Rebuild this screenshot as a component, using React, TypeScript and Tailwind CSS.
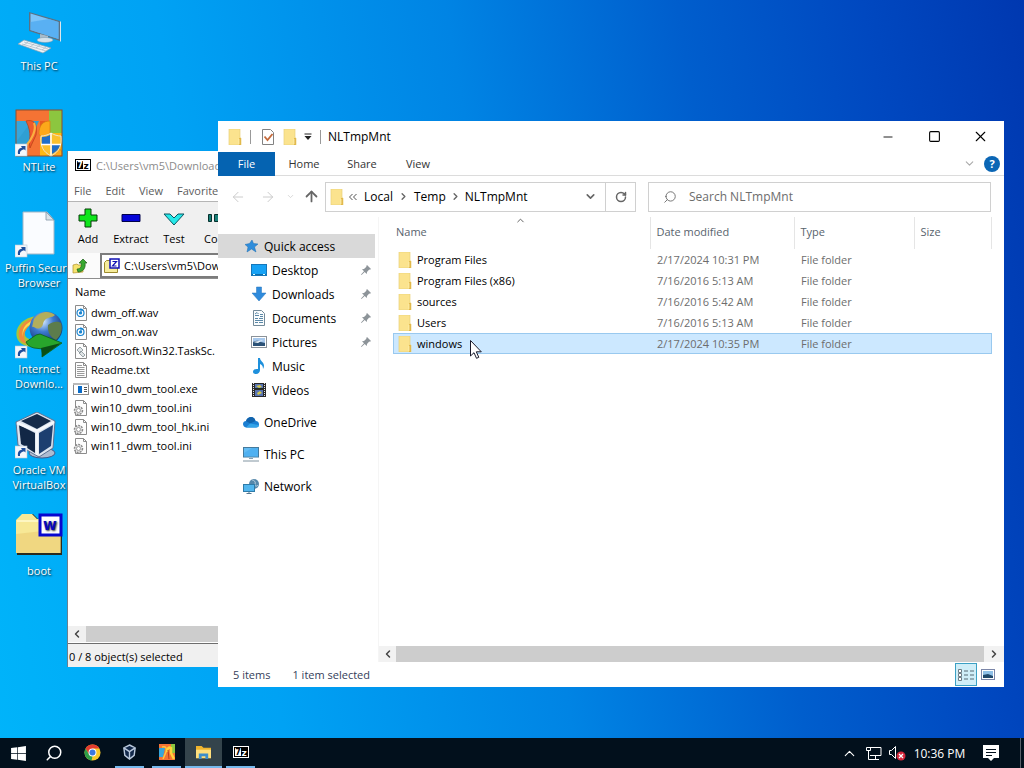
import type { ReactNode } from "react";
import { FaWindows } from "react-icons/fa";
import { ChevronDown, ChevronLeft, ChevronRight, ChevronUp, ArrowLeft, ArrowRight, ArrowUp, RotateCw, Minus, Square, X, Search } from "lucide-react";

const ShortcutArrow = () => (
  <g>
    <rect x="0" y="35" width="12" height="12" fill="#f4f7fb" stroke="#b8c8d8" strokeWidth="0.6" />
    <path d="M3 45c-.5-4 1-6 4-6.200l-1-1.800h4.500v4.500l-1.500-1.200C6 41 4.500 42.500 5 45z" fill="#1f4f9c" />
  </g>
);

const ThisPcIcon = () => (
  <svg viewBox="0 0 48 48" className="w-12 h-12">
    <path d="M14 4l31 9v20L14 23z" fill="#5a7184" />
    <path d="M15.500 5.500l28 8.500v17L15.500 22z" fill="#7cc4fa" />
    <path d="M15.500 14L34 11l9.500 3v17L15.500 22z" fill="#4aa8f0" opacity="0.700" />
    <path d="M45 13l1 1v20l-1-1z" fill="#dde6ec" />
    <path d="M25 26l8 2v4l-8-1z" fill="#a8bccb" />
    <ellipse cx="30" cy="32" rx="8" ry="2.500" fill="#d5e2eb" stroke="#7d95a8" strokeWidth="0.500" />
    <path d="M3 36l6-4 27 8-8 5z" fill="#eef3f7" stroke="#8ba0b2" strokeWidth="0.700" />
    <path d="M7 36l24 7M9 34l24 7M13 34l-4 3M19 36l-4 3M25 37l-4 3M31 39l-4 3" stroke="#a7b6c3" strokeWidth="0.700" />
  </svg>
);

const NtLiteArt = () => (
  <g>
    <rect x="1" y="1" width="46" height="46" fill="#f47334" />
    <path d="M34 1h13v25H34z" fill="#8cc63f" />
    <path d="M1 12h12v23H1z" fill="#35a6dc" />
    <path d="M25 12h9v35h-9z" fill="#e85a20" />
    <path d="M25 24h22v23H25z" fill="#fdb913" />
    <path d="M1 33L17 12h7L11 39H1z" fill="#2f9fd3" />
    <path d="M11 12c7-2 12 2 10 14L15 39c-2-8 3-13-4-27z" fill="#ee5a2d" stroke="#b73e14" strokeWidth="0.700" />
    <path d="M24 25c0-9 4-13 11-13v14l12 17v4h-9z" fill="#fca81a" stroke="#d97c11" strokeWidth="0.700" />
    <path d="M19 14c3 7-3 17-8 23" stroke="#fbb040" strokeWidth="2" fill="none" />
  </g>
);

const NtLiteIcon = () => (
  <svg viewBox="0 0 48 48" className="w-12 h-12">
    <NtLiteArt />
    <rect x="1" y="1" width="46" height="46" fill="none" stroke="#8e4e2c" />
    <path d="M36 24c3 2 7 3 10 3 1 10-2 16-10 20-8-4-11-10-10-20 3 0 7-1 10-3z" fill="#fbc02d" stroke="#e8eef4" strokeWidth="0.800" />
    <path d="M35 26v9h-8c-.3-2-.3-5 0-7 3 0 6-1 8-2zM37 36h8c-1 4-4 7-8 9z" fill="#1e6ec8" />
    <path d="M36 24v22M26 35.500h20" stroke="#fff" strokeWidth="1.500" />
    <ShortcutArrow />
  </svg>
);

const PageShortcutIcon = () => (
  <svg viewBox="0 0 48 48" className="w-12 h-12">
    <path d="M8 2h24l7 8v34H8z" fill="#fafcff" stroke="#a4b6c6" />
    <path d="M31 2v8h8z" fill="#dce4ea" stroke="#8295a6" strokeWidth="0.800" />
    <ShortcutArrow />
  </svg>
);

const IdmIcon = () => (
  <svg viewBox="0 0 48 48" className="w-12 h-12">
    <defs>
      <radialGradient id="globe" cx="0.4" cy="0.3" r="0.8">
        <stop offset="0" stopColor="#d9ecff" />
        <stop offset="0.4" stopColor="#3c79cf" />
        <stop offset="1" stopColor="#0b2560" />
      </radialGradient>
    </defs>
    <path d="M21 5C7 7-1 17 2 27c2 6 9 9 18 9v-7c-8-1-11-3-10-8 1-6 6-9 12-11z" fill="#a6c63a" />
    <path d="M20 7C8 9 2 18 4 26c1 4 4 6 8 7-3-4-4-9-1-14 2-4 6-7 10-8z" fill="#f08b3c" />
    <path d="M19 9C10 12 6 19 8 26c-1-7 4-12 12-14z" fill="#f7dc4c" />
    <circle cx="31" cy="17" r="16.500" fill="url(#globe)" />
    <path d="M19 8c6-8 15-9 21-4-3 3-8 2-10 5-3 3-1 6-5 8s-6-2-8-1z" fill="#b3ae5c" />
    <path d="M33 14c5-4 10-4 13-2 2 6 0 13-5 17-5-2-9-8-8-15z" fill="#5c7c4c" />
    <path d="M21 24l4-1 22 9-20 14 1-8-9-1c-4-1-7-3-8-6z" fill="#28a52c" stroke="#0c5e18" strokeWidth="0.800" />
    <path d="M26 37l20-5-19 14z" fill="#0a4f16" />
    <ShortcutArrow />
  </svg>
);

const VirtualBoxIcon = () => (
  <svg viewBox="0 1 48 48" className="w-12 h-12">
    <ellipse cx="27" cy="42" rx="13" ry="5" fill="#aebbd0" stroke="#41598a" />
    <path d="M22 1l18 9-2 27-14 9L3 34 1 11z" fill="#dbe4ef" stroke="#5d7192" />
    <path d="M22 3l14 7-14 8L6 10z" fill="#152b4a" />
    <path d="M4 14l16 8v20L6 33z" fill="#122746" />
    <path d="M38 14l-2 21-12 8V22z" fill="#1d3f70" />
    <path d="M2 12l20 8 17-9M22 20v24" stroke="#f5f8fc" strokeWidth="2.500" fill="none" />
    <ShortcutArrow />
  </svg>
);

const BootFolderIcon = () => (
  <svg viewBox="0 4 48 48" className="w-12 h-12">
    <path d="M2 46V11l6-6h10l5 5h24v36z" fill="#2c2a1c" />
    <path d="M1 44V11l6-6h10l5 5h23v34z" fill="#f7e896" />
    <path d="M1 44V25l45-5v24z" fill="#ecd078" opacity="0.700" />
    <path d="M2 12h43" stroke="#fffbd0" strokeWidth="1.500" />
    <rect x="25" y="6" width="21" height="20" fill="#fff" stroke="#0707d0" strokeWidth="3" />
    <text x="35" y="21" textAnchor="middle" fontFamily="DejaVu Sans" fontWeight="700" fontSize="15" fill="#0707bb">w</text>
  </svg>
);

const FolderIcon = () => (
  <svg viewBox="0 0 16 16" className="w-4 h-4 shrink-0">
    <path d="M2 0h11v9h1v7H2z" fill="#fbe38e" />
    <path d="M2 0h11v9h1v7H2z" fill="none" stroke="#ead078" strokeWidth="0.700" />
    <path d="M12 9h2v7h-2z" fill="#e2b94c" />
    <path d="M12 10v5" stroke="#fff3be" strokeWidth="0.700" />
  </svg>
);

const SevenZipLogo = ({ inverted = false }: { inverted?: boolean }) => (
  <svg viewBox="0 0 16 12" className="w-4 h-3 shrink-0">
    <rect x="0.500" y="0.500" width="15" height="11" fill={inverted ? "#000" : "#fff"} stroke={inverted ? "#fff" : "#000"} />
    <rect x="2" y="2" width="6" height="8" fill={inverted ? "#fff" : "#000"} />
    <text x="5" y="9" textAnchor="middle" fontFamily="DejaVu Sans" fontWeight="700" fontSize="8" fill={inverted ? "#000" : "#fff"}>7</text>
    <text x="11" y="10" textAnchor="middle" fontFamily="DejaVu Sans" fontWeight="700" fontSize="9" fill={inverted ? "#fff" : "#000"}>z</text>
  </svg>
);

const PinIcon = () => (
  <svg viewBox="0 0 12 12" className="w-3 h-3 ml-auto mr-[3px]">
    <path d="M7 1l4 4-1 .7-.8-.1L7 8l-.2 2L4.700 8 1.500 11 1 10.500 4 7.300 2 5.200 4 5l2.400-2.200L6.300 2z" fill="#8d9499" />
  </svg>
);

const FileIcon = ({ kind }: { kind: string }) => {
  if (kind === "exe") {
    return (
      <svg viewBox="0 0 16 16" className="w-4 h-4 shrink-0">
        <rect x="0.500" y="2.500" width="15" height="11" fill="#fff" stroke="#8a8a8a" />
        <path d="M0 2h16v2H0z" fill="#b9b9b9" />
        <rect x="5" y="5" width="4" height="7" fill="#0a6cc8" />
        <path d="M11 6.500h3M11 8.500h3M11 10.500h3" stroke="#555" />
      </svg>
    );
  }
  return (
    <svg viewBox="0 0 16 16" className="w-4 h-4 shrink-0">
      <path d="M2.500.5h8l3 3v12h-11z" fill="#fdfdfd" stroke="#8c8c8c" />
      <path d="M10.500.5v3h3" fill="none" stroke="#8c8c8c" />
      {kind === "wav" && (
        <g fill="none" stroke="#1883cf" strokeWidth="1.200">
          <circle cx="7.500" cy="8" r="3.500" />
          <circle cx="7.500" cy="8" r="1" fill="#1883cf" />
          <path d="M8 8V4l2.500 1.500" />
        </g>
      )}
      {kind === "txt" && <path d="M4 3.500h5M4 5.500h7.500M4 7.500h7.500M4 9.500h7.500M4 11.500h7.500M4 13.500h7.500" stroke="#999" />}
      {kind === "xml" && <path d="M4 7l3-3 3 3-3 3zM6 10l2-2 4 4-2 2z" fill="#dfe4e6" stroke="#849095" strokeWidth="0.800" />}
      {kind === "ini" && (
        <g fill="#e9e9e9" stroke="#8a8a8a">
          <circle cx="5.500" cy="10.500" r="4" strokeDasharray="2 1" strokeWidth="1.500" />
          <circle cx="5.500" cy="10.500" r="2" fill="#fff" strokeWidth="0.800" />
        </g>
      )}
    </svg>
  );
};

const NavIcon = ({ kind }: { kind: string }) => (
  <svg viewBox="0 0 16 16" className="w-4 h-4 shrink-0">
    {kind === "star" && <path d="M9 2l1.500 3.500 4.500.5-3.500 3L13 14 8.500 11 4 14l1-5L2 6.500l4.500-1z" fill="#2f8ddb" stroke="#1f6fb3" strokeWidth="0.500" />}
    {kind === "desktop" && (
      <g>
        <rect x="0.500" y="2.500" width="15" height="11" fill="#17a2f5" stroke="#1677ba" />
        <path d="M1 12.500h14" stroke="#0c6dab" />
        <path d="M2 12.500h2M12 12.500h2" stroke="#dff" />
      </g>
    )}
    {kind === "downloads" && <path d="M5.500 1h5v6H15l-7 8-7-8h4.500z" fill="#2f8bdc" stroke="#2475bd" strokeWidth="0.500" />}
    {kind === "documents" && (
      <g>
        <path d="M2.500.5h8l3 3v12h-11z" fill="#fafcfd" stroke="#738a99" />
        <path d="M4 5.500h4M9 4.500h3M9 6.500h3M4 8.500h3M8 8.500h4M4 10.500h8M4 12.500h3M8 12.500h4" stroke="#5b88a7" />
        <path d="M4 4l2-1.500L7.500 4" stroke="#5b88a7" fill="none" />
      </g>
    )}
    {kind === "pictures" && (
      <g>
        <rect x="0.500" y="2.500" width="15" height="11" fill="#fff" stroke="#8b9299" />
        <rect x="2" y="4" width="12" height="8" fill="#a8c9ed" />
        <path d="M2 8c3-2 6-1 8 0l4 1v3H2z" fill="#2c5277" />
        <path d="M2 8l6-1 4-1-5 3z" fill="#eff6fb" />
      </g>
    )}
    {kind === "music" && <path d="M7 0h2c0 3 4 4 4 8 0 1-.5 2-1 3 0-3-1-4-3-5v6c0 2-1.500 4-4 4-1.800 0-3-1-3-2.300C2 12 4 10.500 7 11z" fill="#1e90dc" />}
    {kind === "videos" && (
      <g>
        <rect x="1" y="1" width="14" height="14" fill="#292929" />
        <path d="M2.500 1v14M13.500 1v14" stroke="#e7e7e7" strokeDasharray="1 1" />
        <path d="M4 2h8v5H4zM4 8h8v6H4z" fill="#5975b5" />
        <path d="M5 4l4-1 2 2-3 1zM6 11l3-2 2 2-4 2z" fill="#d2c84c" />
        <path d="M4 6h8v1H4z" fill="#1b2a24" />
      </g>
    )}
    {kind === "onedrive" && (
      <g>
        <path d="M3 13.500C1 13 0 11.500 0 10c0-2 1.500-3 3-3 1-3 3-4 5-4 2.500 0 4 2 4.500 4C15 7 16 8.500 16 10.500c0 2-1 3-3 3z" fill="#1b7fd2" />
        <path d="M3 7c1-3 3-4 5-4 2.500 0 4 2 4.500 4L7 9.500z" fill="#1263ac" />
        <path d="M7 9.500L3 13.500h10c2 0 3-1 3-2.500z" fill="#33a3e8" />
      </g>
    )}
    {kind === "pc" && (
      <g>
        <rect x="0.500" y="1.500" width="15" height="9.500" fill="#64bdf4" stroke="#447a9d" />
        <path d="M1 7l8-5h6v8.500H1z" fill="#43a9ef" opacity="0.600" />
        <path d="M6 12h4v1H6z" fill="#84a1b4" />
        <path d="M0 15h16" stroke="#8194a1" />
      </g>
    )}
    {kind === "network" && (
      <g>
        <circle cx="11" cy="6" r="5" fill="#5587aa" />
        <path d="M9 2c2 0 4 2 3 4s2 3 3 1" fill="none" stroke="#c0d6e4" />
        <rect x="0.500" y="6.500" width="11" height="7" fill="#52b6ee" stroke="#2f7ba8" />
        <path d="M6 14v1M3.500 15.500h5" stroke="#577890" />
      </g>
    )}
  </svg>
);

const desktopIcons: { icon: ReactNode; lines: string[] }[] = [
  { icon: <ThisPcIcon />, lines: ["This PC"] },
  { icon: <NtLiteIcon />, lines: ["NTLite"] },
  { icon: <PageShortcutIcon />, lines: ["Puffin Secure", "Browser"] },
  { icon: <IdmIcon />, lines: ["Internet", "Downlo..."] },
  { icon: <VirtualBoxIcon />, lines: ["Oracle VM", "VirtualBox"] },
  { icon: <BootFolderIcon />, lines: ["boot"] },
];

const archiveFiles = [
  { name: "dwm_off.wav", kind: "wav" },
  { name: "dwm_on.wav", kind: "wav" },
  { name: "Microsoft.Win32.TaskSc.", kind: "xml" },
  { name: "Readme.txt", kind: "txt" },
  { name: "win10_dwm_tool.exe", kind: "exe" },
  { name: "win10_dwm_tool.ini", kind: "ini" },
  { name: "win10_dwm_tool_hk.ini", kind: "ini" },
  { name: "win11_dwm_tool.ini", kind: "ini" },
];

const quickAccess = [
  { label: "Desktop", kind: "desktop", pinned: true },
  { label: "Downloads", kind: "downloads", pinned: true },
  { label: "Documents", kind: "documents", pinned: true },
  { label: "Pictures", kind: "pictures", pinned: true },
  { label: "Music", kind: "music", pinned: false },
  { label: "Videos", kind: "videos", pinned: false },
];

const navRoots = [
  { label: "OneDrive", kind: "onedrive" },
  { label: "This PC", kind: "pc" },
  { label: "Network", kind: "network" },
];

const folders = [
  { name: "Program Files", date: "2/17/2024 10:31 PM" },
  { name: "Program Files (x86)", date: "7/16/2016 5:13 AM" },
  { name: "sources", date: "7/16/2016 5:42 AM" },
  { name: "Users", date: "7/16/2016 5:13 AM" },
  { name: "windows", date: "2/17/2024 10:35 PM", selected: true },
];

const ArchiveWindow = () => (
  <section aria-label="7-Zip" className="absolute left-[67px] top-[151px] bottom-[71px] w-[480px] flex flex-col bg-white border-l border-[#6b7f8f] text-black">
    <header className="h-7 shrink-0 flex items-center gap-[5px] pl-[7px] text-[#8b8b8b]">
      <SevenZipLogo />
      <span className="whitespace-nowrap">C:\Users\vm5\Downloads</span>
    </header>
    <nav className="h-[23px] shrink-0 flex items-center gap-[14px] pl-[6px] border-b border-[#b5b5b5] text-[#5c5c5c]">
      <button>File</button>
      <button>Edit</button>
      <button>View</button>
      <button>Favorites</button>
    </nav>
    <div className="h-[51px] shrink-0 flex bg-[#f0f0f0] pt-[6px]">
      <button className="w-10 flex flex-col items-center gap-[3px]">
        <svg viewBox="0 0 20 20" className="w-5 h-5"><path d="M7 1h6v6h6v6h-6v6H7v-6H1V7h6z" fill="#0ee61c" stroke="#063d08" /></svg>
        <span>Add</span>
      </button>
      <button className="w-[46px] flex flex-col items-center gap-[3px]">
        <svg viewBox="0 0 20 20" className="w-5 h-5"><path d="M1 6.500h18v7H1z" fill="#0505d8" stroke="#02024a" /></svg>
        <span>Extract</span>
      </button>
      <button className="w-10 flex flex-col items-center gap-[3px]">
        <svg viewBox="0 0 22 20" className="w-[22px] h-5"><path d="M1 6h6l4 4 4-4h6L11 17z" fill="#25e9e9" stroke="#0d5560" /></svg>
        <span>Test</span>
      </button>
      <button className="w-[46px] flex flex-col items-center gap-[3px]">
        <svg viewBox="0 0 28 20" className="w-7 h-5"><path d="M5.500 6.500h3v7h-3zM11.500 6.500h12v7h-12z" fill="#197f78" stroke="#05302d" /></svg>
        <span>Copy</span>
      </button>
    </div>
    <div className="h-[26px] shrink-0 flex items-center border-b border-[#8d8d8d]">
      <button aria-label="Up one level" className="w-[32px] h-full grid place-items-center pr-2 bg-[#fbfbfb]">
        <svg viewBox="0 0 16 16" className="w-4 h-4">
          <path d="M1 15V7l4-1 1 1h5v7z" fill="#f6e36e" stroke="#b0912b" strokeWidth="0.700" />
          <path d="M5 11c3 0 5-2 4-6H7l4-4 4 4h-2c1 5-2 9-7 9z" fill="#38a82f" stroke="#1d5d18" strokeWidth="0.700" />
        </svg>
      </button>
      <div className="h-full flex-1 flex items-center gap-1 pl-[2px] border-2 border-r-0 border-[#7c7c7c] bg-white">
        <svg viewBox="0 0 16 16" className="w-4 h-4 shrink-0">
          <path d="M.5 14.500V4.500l2-2h4v2h7v10z" fill="#f6ec9b" stroke="#9c8a2d" />
          <rect x="6" y="1" width="9" height="9" fill="#fff" stroke="#1111b4" strokeWidth="1.500" />
          <path d="M8.500 3.500h4l-4 4.500h4" fill="none" stroke="#1111b4" strokeWidth="1.200" />
        </svg>
        <input aria-label="Address" defaultValue="C:\Users\vm5\Downloads\" className="flex-1 outline-none" />
      </div>
    </div>
    <table className="block flex-1">
      <thead className="block">
        <tr className="block h-6 pl-[7px] pt-[5px]"><th className="font-normal">Name</th></tr>
      </thead>
      <tbody className="block">
        {archiveFiles.map((f) => (
          <tr key={f.name} className="block pl-[5px]">
            <td className="h-[19px] flex items-center gap-[2px] whitespace-nowrap"><FileIcon kind={f.kind} />{f.name}</td>
          </tr>
        ))}
      </tbody>
    </table>
    <div className="h-4 shrink-0 flex bg-[#cdcdcd]">
      <button aria-label="Scroll left" className="w-[18px] grid place-items-center bg-[#f0f0f0] text-[#444]"><ChevronLeft size={12} strokeWidth={3} /></button>
    </div>
    <footer className="h-6 mt-px shrink-0 flex items-center pl-[1px] pt-[2px] bg-[#f0f0f0] border-t border-[#6d6d6d]">0 / 8 object(s) selected</footer>
  </section>
);

const ExplorerWindow = () => (
  <section aria-label="NLTmpMnt" className="absolute left-[218px] right-5 top-[121px] bottom-[51px] flex flex-col bg-white text-black">
    <header className="h-[31px] shrink-0 flex items-center pl-[9px]">
      <FolderIcon />
      <span className="w-px h-[14px] ml-[7px] bg-[#999]" />
      <button aria-label="Properties" className="ml-[9px]">
        <svg viewBox="0 0 16 16" className="w-4 h-4">
          <path d="M2.500.5h8l3 3v12h-11z" fill="#fff" stroke="#828282" />
          <path d="M4.500 7.500l3 3.500 5-6" fill="none" stroke="#c46a3c" strokeWidth="1.800" />
        </svg>
      </button>
      <button aria-label="New folder" className="ml-[6px]"><FolderIcon /></button>
      <button aria-label="Customize toolbar" className="ml-[5px]">
        <svg viewBox="0 0 10 8" className="w-[10px] h-2"><path d="M1.500 1h7" stroke="#222" /><path d="M1.500 3h7L5 7z" fill="#222" /></svg>
      </button>
      <span className="w-px h-[14px] ml-[7px] bg-[#999]" />
      <h1 className="ml-[7px] text-[12px]">NLTmpMnt</h1>
      <div className="ml-auto mr-px h-full flex">
        <button aria-label="Minimize" className="w-[46px] grid place-items-center"><Minus size={14} strokeWidth={1.500} /></button>
        <button aria-label="Maximize" className="w-[46px] grid place-items-center"><Square size={13} strokeWidth={2} /></button>
        <button aria-label="Close" className="w-[46px] grid place-items-center"><X size={17} strokeWidth={1.500} /></button>
      </div>
    </header>

    {/* ribbon tabs */}
    <nav className="h-6 shrink-0 flex items-center border-b border-[#dcdcdc] text-[#333]">
      <button className="w-[57px] h-6 bg-[#0563b1] text-white">File</button>
      <button className="w-[58px]">Home</button>
      <button className="w-[58px]">Share</button>
      <button className="w-[54px]">View</button>
      <button aria-label="Expand ribbon" className="ml-auto mr-2 text-[#aaa]"><ChevronDown size={13} /></button>
      <button aria-label="Help" className="w-4 h-4 mr-1 rounded-full bg-[#0b66b5] text-white leading-4 font-bold">?</button>
    </nav>

    <div className="h-[41px] shrink-0 flex items-center pl-3 pr-[13px] text-[#666]">
      <button aria-label="Back" className="w-[30px] text-[#ccc]"><ArrowLeft size={16} strokeWidth={1.500} /></button>
      <button aria-label="Forward" className="w-[26px] text-[#ccc]"><ArrowRight size={16} strokeWidth={1.500} /></button>
      <button aria-label="Recent" className="w-[17px] text-[#ccc]"><ChevronDown size={9} /></button>
      <button aria-label="Up" className="w-[22px]"><ArrowUp size={17} strokeWidth={2.500} /></button>
      <div className="h-[30px] flex-[306] flex items-center border border-[#d0d0d0] pl-[3px] text-[12px] text-black">
        <FolderIcon />
        <svg viewBox="0 0 8 8" className="w-2 h-2 mx-[4px]"><path d="M3.500 1l-3 3 3 3M7.500 1l-3 3 3 3" fill="none" stroke="#555" /></svg>
        <button className="ml-[3px]">Local</button>
        <ChevronRight size={11} strokeWidth={3} className="mx-[5px] text-[#666]" />
        <button>Temp</button>
        <ChevronRight size={11} strokeWidth={3} className="mx-[4px] text-[#666]" />
        <button>NLTmpMnt</button>
        <button aria-label="Previous locations" className="w-[30px] ml-auto grid place-items-center text-[#666]"><ChevronDown size={13} strokeWidth={3} /></button>
        <button aria-label="Refresh" className="w-[30px] h-full grid place-items-center border-l border-[#d0d0d0] text-[#666]"><RotateCw size={12} strokeWidth={3} /></button>
      </div>
      <label className="h-[30px] flex-[327] ml-3 flex items-center gap-3 border border-[#d0d0d0] pl-[14px]">
        <Search size={14} strokeWidth={1.500} className="-scale-x-100" />
        <input aria-label="Search" placeholder="Search NLTmpMnt" className="flex-1 min-w-0 outline-none text-[12px] placeholder:text-[#6d6d6d]" />
      </label>
    </div>

    <div className="flex-1 min-h-0 flex">
      <nav className="w-[157px] pt-[17px] text-[12px]">
        <a href="#" className="h-6 flex items-center gap-[5px] pl-[25px] bg-[#d9d9d9]"><NavIcon kind="star" />Quick access</a>
        {quickAccess.map((n) => (
          <a key={n.label} href="#" className="h-6 flex items-center gap-[5px] pl-[33px]">
            <NavIcon kind={n.kind} />{n.label}
            {n.pinned && <PinIcon />}
          </a>
        ))}
        {navRoots.map((n) => (
          <a key={n.label} href="#" className="h-6 mt-2 flex items-center gap-[5px] pl-[25px]"><NavIcon kind={n.kind} />{n.label}</a>
        ))}
      </nav>
      <main className="flex-1 min-w-0 ml-[3px] flex flex-col border-l border-[#f5f5f5]">
        <div className="flex-1 pl-[14px] pr-3">
          <table className="w-full table-fixed text-left text-[#6d6d6d]">
            <thead>
              <tr className="h-8 text-[#58636d]">
                <th className="w-[257px] font-normal pl-[3px] pb-1 relative">
                  Name
                  <ChevronUp size={11} className="absolute left-[122px] -top-[2px] text-[#555]" />
                </th>
                <th className="w-[144px] font-normal pl-[6px] pb-1 border-l border-[#e5e5e5]">Date modified</th>
                <th className="w-[120px] font-normal pl-[6px] pb-1 border-l border-[#e5e5e5]">Type</th>
                <th className="font-normal pl-[6px] pb-1 border-x border-[#e5e5e5]">Size</th>
              </tr>
            </thead>
            <tbody>
              {folders.map((f) => (
                <tr key={f.name} className={f.selected ? "h-[21px] bg-[#cce8ff] outline outline-[#99c9ef] -outline-offset-1" : "h-[21px]"}>
                  <td>
                    <div className="flex items-center gap-1 pl-1 text-black"><FolderIcon />{f.name}</div>
                  </td>
                  <td className="pl-[7px]">{f.date}</td>
                  <td className="pl-[7px]">File folder</td>
                  <td />
                </tr>
              ))}
            </tbody>
          </table>
        </div>
        <div className="h-4 shrink-0 flex justify-between bg-[#cdcdcd]">
          <button aria-label="Scroll left" className="w-[17px] grid place-items-center bg-[#f2f2f2] text-[#444]"><ChevronLeft size={12} strokeWidth={3} /></button>
          <button aria-label="Scroll right" className="w-5 grid place-items-center bg-[#f2f2f2] text-[#444]"><ChevronRight size={12} strokeWidth={3} /></button>
        </div>
      </main>
    </div>

    <footer className="h-[25px] shrink-0 flex items-center pl-[15px] pr-[5px] text-[#35405a]">
      <span>5 items</span>
      <span className="ml-[22px]">1 item selected</span>
      <button aria-label="Details view" className="w-[22px] h-[23px] ml-auto grid place-items-center border border-[#3ba0c4] bg-[#cfeef8]">
        <svg viewBox="0 0 16 14" className="w-4 h-[14px]">
          <path d="M.5 1.500h3v3h-3zM.5 5.500h3v3h-3zM.5 9.500h3v3h-3z" fill="#fff" stroke="#6d7c85" />
          <path d="M6 3h4M12 3h4M6 7h4M12 7h4M6 11h4M12 11h4" stroke="#566a75" />
        </svg>
      </button>
      <button aria-label="Thumbnail view" className="w-[22px] grid place-items-center">
        <svg viewBox="0 0 14 12" className="w-[14px] h-3">
          <rect x="0.500" y="0.500" width="13" height="10" fill="#fff" stroke="#7b86a8" />
          <path d="M2 2h10v7H2z" fill="#8fc0e6" />
          <path d="M2 6l5-1 5 2v2H2z" fill="#20486a" />
        </svg>
      </button>
    </footer>
  </section>
);

const taskButton = "w-[29px] mx-1 h-full grid place-items-center border-b-2";

const Taskbar = () => (
  <footer className="h-[30px] shrink-0 flex items-center bg-[#02101c] text-white">
    <button aria-label="Start" className="w-9 grid place-items-center"><FaWindows size={17} /></button>
    <button aria-label="Search" className="w-[38px] grid place-items-center pr-[2px]"><Search size={18} strokeWidth={2} className="-scale-x-100" /></button>
    <button aria-label="Chrome" className={`${taskButton} border-transparent`}>
      <svg viewBox="0 0 18 18" className="w-[17px] h-[17px]">
        <circle cx="9" cy="9" r="8.500" fill="#f8c928" />
        <path d="M1.600 4.800A8.500 8.500 0 0 1 16.400 4.800H9L5.400 11z" fill="#e23c2f" />
        <path d="M1.600 4.800L5.400 11.200 9 13l-1 4.400A8.500 8.500 0 0 1 1.600 4.800z" fill="#2c9f4a" />
        <circle cx="9" cy="9" r="4.200" fill="#fff" />
        <circle cx="9" cy="9" r="3.200" fill="#3b78df" />
      </svg>
    </button>
    <button aria-label="VirtualBox" className={`${taskButton} border-[#76b9ed]`}>
      <svg viewBox="0 0 16 18" className="w-[15px] h-[17px]" fill="#13294a" stroke="#bccbde" strokeWidth="1.500">
        <path d="M8 1l6 3-1 8-5 4-5-4-1-8z" />
        <path d="M2 4l6 4 6-4M8 8v8" />
      </svg>
    </button>
    <button aria-label="NTLite" className={`${taskButton} border-[#76b9ed]`}>
      <svg viewBox="0 0 16 16" className="w-4 h-4">
        <rect width="16" height="16" fill="#f47334" />
        <path d="M0 4h6L4 13H0z" fill="#35a6dc" />
        <path d="M12 0h4v9h-4z" fill="#8cc63f" />
        <path d="M3 3c4-1 5 1 4 5L4 15" fill="none" stroke="#fbc640" strokeWidth="1.500" />
        <path d="M8 8c0-4 2-5 4-4v5l3 6" fill="none" stroke="#ffd23a" strokeWidth="2.500" />
        <path d="M9 6l1 9" stroke="#b5401c" />
      </svg>
    </button>
    <button aria-label="File Explorer" className="w-[37px] h-full grid place-items-center border-b-2 border-[#76b9ed] bg-[#34444c]">
      <svg viewBox="0 0 18 16" className="w-[17px] h-[15px]">
        <path d="M1 1h6l2 2h8v11H1z" fill="#efb42e" />
        <path d="M1 5h16v9H1z" fill="#ffdf7c" />
        <path d="M4 15V9h10v6h-3v-3H7v3z" fill="#3d8ecb" />
      </svg>
    </button>
    <button aria-label="7-Zip" className={`${taskButton} border-[#76b9ed]`}><SevenZipLogo inverted /></button>

    <div className="ml-auto h-full flex items-center">
      <button aria-label="Show hidden icons" className="w-6 grid place-items-center"><ChevronUp size={17} strokeWidth={1.500} /></button>
      <button aria-label="Network" className="w-6 grid place-items-center">
        <svg viewBox="0 0 17 16" className="w-[17px] h-4" fill="none" stroke="#fff">
          <path d="M5 2.500h11v8H5M10.500 11v3M7 14.500h7" />
          <path d="M1.500 2.500h4v3h-4zM3.500 6v8.500H7" />
        </svg>
      </button>
      <button aria-label="Volume muted" className="w-6 grid place-items-center">
        <svg viewBox="0 0 18 16" className="w-[18px] h-4">
          <path d="M1.500 5.500h2l4-4v12l-4-4h-2z" fill="none" stroke="#fff" />
          <circle cx="13" cy="11" r="4.500" fill="#d4283c" />
          <path d="M11 9l4 4M15 9l-4 4" stroke="#fff" strokeWidth="1.200" />
        </svg>
      </button>
      <time className="w-[61px] text-center text-[12px]">10:36 PM</time>
      <button aria-label="Notifications" className="w-[42px] grid place-items-center">
        <svg viewBox="0 0 16 16" className="w-4 h-4"><path d="M0 0h16v13h-5l-3 3-3-3H0z" fill="#fff" /><path d="M3 4.500h10M3 7.500h10M3 10.500h6" stroke="#02101c" /></svg>
      </button>
      <button aria-label="Show desktop" className="w-1 h-full ml-2 border-l border-[#596069]" />
    </div>
  </footer>
);

const App = () => {
  return (
    <div className="h-screen flex flex-col overflow-hidden font-['Open_Sans',sans-serif] text-[11px] leading-[15px] bg-[linear-gradient(80deg,#00b4fa_0%,#00a2f4_25%,#0084e4_50%,#005ecd_70%,#0048c0_86%,#0038b0_100%)]">
      <div className="relative flex-1 min-h-0">
        <div className="w-[78px] flex flex-col pt-2">
          {desktopIcons.map((d) => (
            <button key={d.lines[0]} className="h-[101px] flex flex-col items-center gap-[2px] text-white text-shadow-[1px_1px_2px_rgb(0_0_0/0.8)]">
              {d.icon}
              <span className="flex flex-col items-center whitespace-nowrap">
                {d.lines.map((line) => <span key={line}>{line}</span>)}
              </span>
            </button>
          ))}
        </div>
        <ArchiveWindow />
        <ExplorerWindow />
        {/* mouse pointer */}
        <svg viewBox="0 0 12 19" className="absolute left-[470px] top-[340px] w-3 h-[19px]">
          <path d="M.5.5v15.500l3.500-3.300 2.500 5.600 2.300-1-2.500-5.500h5z" fill="#fff" stroke="#1a1a2a" />
        </svg>
      </div>
      <Taskbar />
    </div>
  );
};

export default App;
